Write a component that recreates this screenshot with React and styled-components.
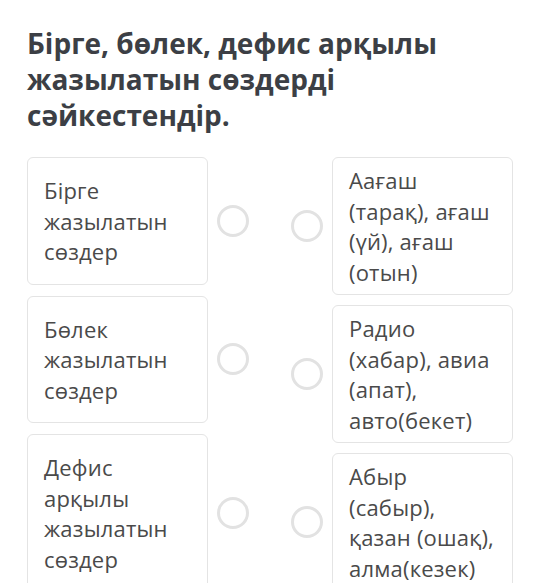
import React from 'react'
import styled, { createGlobalStyle } from 'styled-components'

const GlobalStyle = createGlobalStyle`
  body {
    margin: 0;
    background: #ffffff;
    font-family: "Open Sans", "Noto Sans", sans-serif;
  }
`

const pairs = [
  { left: 'Бірге жазылатын сөздер', right: 'Аағаш (тарақ), ағаш (үй), ағаш (отын)' },
  { left: 'Бөлек жазылатын сөздер', right: 'Радио (хабар), авиа (апат), авто(бекет)' },
  { left: 'Дефис арқылы жазылатын сөздер', right: 'Абыр (сабыр), қазан (ошақ), алма(кезек)' },
]

const App = () => {
  return (
    <Page>
      <GlobalStyle />
      <Title>Бірге, бөлек, дефис арқылы жазылатын сөздерді сәйкестендір.</Title>
      <Board>
        <Stack side="left">
          {pairs.map((p) => (
            <Item key={p.left}>
              <Card side="left">{p.left}</Card>
              <Dot />
            </Item>
          ))}
        </Stack>
        <Stack side="right">
          {pairs.map((p) => (
            <Item key={p.right}>
              <Dot />
              <Card side="right">{p.right}</Card>
            </Item>
          ))}
        </Stack>
      </Board>
    </Page>
  )
}

export default App

const Page = styled.div`
  width: 540px;
  height: 583px;
  overflow: hidden;
  padding: 25px 27px 0;
  box-sizing: border-box;
`
const Title = styled.h1`
  margin: 0 0 24px;
  font-size: 28px;
  line-height: 36px;
  font-weight: 700;
  color: #3c3f45;
  width: 440px;
`
const Board = styled.div`
  display: flex;
  justify-content: space-between;
`
const Stack = styled.div`
  display: flex;
  flex-direction: column;
  gap: ${(p) => (p.side === 'left' ? '11px' : '10px')};
`
const Item = styled.div`
  display: flex;
  align-items: center;
  gap: 9px;
`
const Card = styled.div`
  width: 181px;
  box-sizing: border-box;
  padding: ${(p) => (p.side === 'left' ? '17px 14px 17px 16px' : '7px 14px 7px 16px')};
  border: 1px solid #e4e4e4;
  border-radius: 6px;
  font-size: 22px;
  letter-spacing: 0.2px;
  line-height: 30.5px;
  color: #4a4a4a;
`
const Dot = styled.span`
  width: 32px;
  height: 32px;
  box-sizing: border-box;
  border: 3px solid #e2e2e2;
  border-radius: 50%;
  flex-shrink: 0;
`
